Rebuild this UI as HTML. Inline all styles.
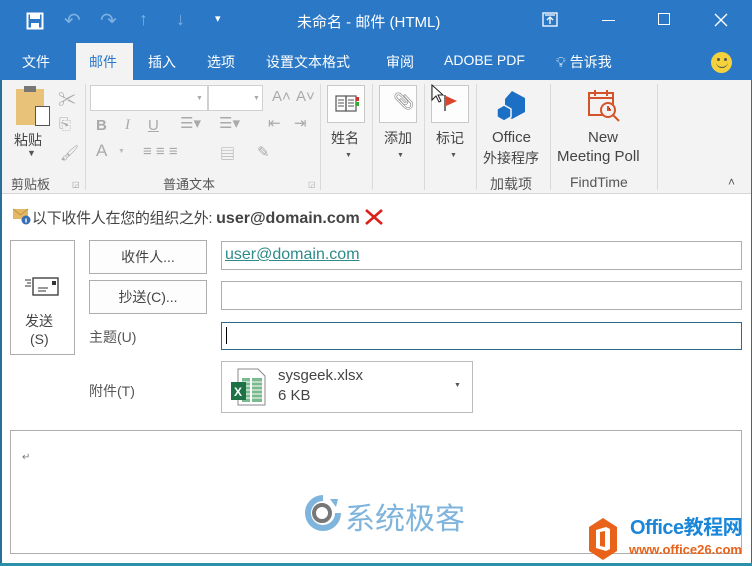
<!DOCTYPE html>
<html><head><meta charset="utf-8">
<style>
*{margin:0;padding:0;box-sizing:border-box}
body{width:752px;height:566px;overflow:hidden;background:#fff;font-family:"Liberation Sans","Noto Sans CJK SC",sans-serif;position:relative;color:#444}
.a{position:absolute;white-space:nowrap}
.tb{left:0;top:0;width:752px;height:80px;background:#2a78c6}
.tab{top:52px;font-size:14px;color:#fff}
.rib{left:0;top:80px;width:752px;height:114px;background:#f3f3f3;border-bottom:1px solid #d6d6d6}
.sep{width:1px;background:#dadada;top:84px;height:106px}
.gl{top:174px;font-size:13px;color:#555}
.lbl{font-size:14px;color:#444;text-align:center}
.btn{background:#fdfdfd;border:1px solid #c8c8c8}
.inp{background:#fff;border:1px solid #adadad}
.g{color:#aaa;font-size:15px}
</style></head><body>
<div class="a tb"></div>
<svg class="a" style="left:26px;top:12px" width="18" height="18" viewBox="0 0 18 18"><rect x="1.5" y="1.5" width="15" height="15" fill="none" stroke="#fff" stroke-width="2"/><rect x="4" y="2" width="10" height="5" fill="#fff"/><rect x="5" y="11" width="8" height="5" fill="#fff"/></svg>
<div class="a" style="left:64px;top:8px;color:#7fb0e2;font-size:20px">&#x21B6;</div>
<div class="a" style="left:100px;top:8px;color:#7fb0e2;font-size:20px">&#x21B7;</div>
<div class="a" style="left:139px;top:9px;color:#7fb0e2;font-size:18px">&#x2191;</div>
<div class="a" style="left:176px;top:9px;color:#7fb0e2;font-size:18px">&#x2193;</div>
<div class="a" style="left:215px;top:12px;color:#fff;font-size:11px">&#x25BE;</div>
<div class="a" style="left:297px;top:11px;color:#fff;font-size:15px">未命名 - 邮件 (HTML)</div>
<svg class="a" style="left:542px;top:12px" width="16" height="15"><rect x="1" y="1" width="14" height="13" fill="none" stroke="#fff" stroke-width="1.3"/><path d="M8 12V5M5 8l3-3 3 3M3 3h10" stroke="#fff" fill="none" stroke-width="1.3"/></svg>
<div class="a" style="left:602px;top:20px;width:13px;height:1px;background:#fff"></div>
<div class="a" style="left:658px;top:13px;width:12px;height:12px;border:1.3px solid #fff"></div>
<svg class="a" style="left:714px;top:13px" width="14" height="14"><path d="M1 1L13 13M13 1L1 13" stroke="#fff" stroke-width="1.4"/></svg>
<div class="a" style="left:76px;top:43px;width:57px;height:38px;background:#f3f3f3"></div>
<div class="a tab" style="left:22px">文件</div>
<div class="a tab" style="left:89px;color:#2a78c6">邮件</div>
<div class="a tab" style="left:148px">插入</div>
<div class="a tab" style="left:207px">选项</div>
<div class="a tab" style="left:266px">设置文本格式</div>
<div class="a tab" style="left:386px">审阅</div>
<div class="a tab" style="left:444px">ADOBE PDF</div>
<div class="a tab" style="left:556px">&#x1F4A1;&#xFE0E; 告诉我</div>
<div class="a" style="left:711px;top:52px;width:21px;height:21px;border-radius:50%;background:#f5d23c"></div>
<div class="a" style="left:717px;top:58px;width:3px;height:3px;background:#555;border-radius:50%"></div>
<div class="a" style="left:724px;top:58px;width:3px;height:3px;background:#555;border-radius:50%"></div>
<div class="a" style="left:716px;top:62px;width:12px;height:6px;border-bottom:1.5px solid #555;border-radius:0 0 6px 6px"></div>
<div class="a rib"></div>
<div class="a" style="left:16px;top:89px;width:28px;height:36px;background:#e9c27a"></div>
<div class="a" style="left:24px;top:86px;width:12px;height:6px;background:#777"></div>
<div class="a" style="left:35px;top:106px;width:15px;height:20px;background:#fff;border:1px solid #555"></div>
<div class="a lbl" style="left:14px;top:130px">粘贴</div>
<div class="a g" style="left:27px;top:148px;font-size:9px;color:#555">&#x25BC;</div>
<div class="a g" style="left:58px;top:86px;font-size:18px">&#x2702;</div>
<div class="a g" style="left:59px;top:116px">&#x2398;</div>
<div class="a g" style="left:60px;top:144px">&#x1F58C;&#xFE0E;</div>
<div class="a gl" style="left:11px">剪贴板</div>
<div class="a" style="left:72px;top:180px;font-size:8px;color:#999">&#x25F2;</div>
<div class="a sep" style="left:85px"></div>
<div class="a inp" style="left:90px;top:85px;width:118px;height:26px;border-color:#d0d0d0"></div>
<div class="a inp" style="left:208px;top:85px;width:55px;height:26px;border-color:#d0d0d0"></div>
<div class="a" style="left:196px;top:95px;font-size:7px;color:#aaa">&#x25BC;</div>
<div class="a" style="left:253px;top:95px;font-size:7px;color:#aaa">&#x25BC;</div>
<div class="a g" style="left:272px;top:88px">A&#x2C4;</div>
<div class="a g" style="left:296px;top:88px">A&#x2C5;</div>
<div class="a" style="left:96px;top:117px;font-size:15px;color:#aaa;font-weight:bold">B</div>
<div class="a" style="left:125px;top:117px;font-size:15px;color:#aaa;font-style:italic;font-family:'Liberation Serif',serif">I</div>
<div class="a" style="left:148px;top:117px;font-size:15px;color:#aaa;text-decoration:underline">U</div>
<div class="a g" style="left:180px;top:114px">&#x2630;&#x25BE;</div>
<div class="a g" style="left:219px;top:114px">&#x2630;&#x25BE;</div>
<div class="a g" style="left:268px;top:114px">&#x21E4;</div>
<div class="a g" style="left:294px;top:114px">&#x21E5;</div>
<div class="a" style="left:96px;top:141px;font-size:17px;color:#aaa">A</div>
<div class="a" style="left:118px;top:148px;font-size:7px;color:#bbb">&#x25BC;</div>
<div class="a g" style="left:143px;top:143px">&#x2261; &#x2261; &#x2261;</div>
<div class="a g" style="left:220px;top:143px">&#x25A4;</div>
<div class="a g" style="left:257px;top:143px">&#x270E;</div>
<div class="a gl" style="left:163px">普通文本</div>
<div class="a" style="left:308px;top:180px;font-size:8px;color:#aaa">&#x25F2;</div>
<div class="a sep" style="left:320px"></div>
<div class="a btn" style="left:327px;top:85px;width:38px;height:38px"></div>
<svg class="a" style="left:335px;top:94px" width="24" height="20"><rect x="1" y="2" width="10" height="15" fill="none" stroke="#555" stroke-width="1.2"/><rect x="11" y="2" width="10" height="15" fill="none" stroke="#555" stroke-width="1.2"/><path d="M3 6h6M3 9h6M3 12h6M13 6h6M13 9h6M13 12h6" stroke="#555"/><rect x="21" y="3" width="3" height="4" fill="#c33"/><rect x="21" y="8" width="3" height="4" fill="#3a3"/></svg>
<div class="a lbl" style="left:331px;top:128px">姓名</div>
<div class="a" style="left:345px;top:152px;font-size:7px;color:#555">&#x25BC;</div>
<div class="a sep" style="left:372px"></div>
<div class="a btn" style="left:379px;top:85px;width:38px;height:38px"></div>
<div class="a" style="left:393px;top:92px;font-size:17px;color:#888">&#x1F4CE;&#xFE0E;</div>
<div class="a lbl" style="left:384px;top:128px">添加</div>
<div class="a" style="left:397px;top:152px;font-size:7px;color:#555">&#x25BC;</div>
<div class="a sep" style="left:424px"></div>
<div class="a btn" style="left:431px;top:85px;width:38px;height:38px"></div>
<svg class="a" style="left:430px;top:83px" width="32" height="32"><path d="M15 12v16" stroke="#555" stroke-width="1.6"/><path d="M16 13l11 5-11 5z" fill="#d9442c"/><path d="M2 2v15l4-4 3 6 2-1-3-6h5z" fill="#fff" stroke="#222" stroke-width="1"/></svg>
<div class="a lbl" style="left:436px;top:128px">标记</div>
<div class="a" style="left:450px;top:152px;font-size:7px;color:#555">&#x25BC;</div>
<div class="a sep" style="left:476px"></div>
<svg class="a" style="left:496px;top:90px" width="34" height="32"><path d="M16 1l13 7v14l-13 7-7-4V9z" fill="#1b6fc4"/><path d="M8 15l7 4v8l-7 4-7-4v-8z" fill="#1b6fc4" stroke="#f3f3f3" stroke-width="1.5"/></svg>
<div class="a lbl" style="left:492px;top:129px;font-size:15px">Office</div>
<div class="a lbl" style="left:483px;top:148px">外接程序</div>
<div class="a gl" style="left:490px;font-size:14px">加载项</div>
<div class="a sep" style="left:550px"></div>
<svg class="a" style="left:587px;top:89px" width="36" height="36"><rect x="2" y="4" width="24" height="22" fill="none" stroke="#d5532b" stroke-width="2"/><path d="M2 9h24M8 1v6M20 1v6" stroke="#d5532b" stroke-width="2"/><circle cx="21" cy="21" r="7" fill="#f3f3f3" stroke="#d5532b" stroke-width="2"/><path d="M21 17v4h3M26 26l6 6" stroke="#d5532b" stroke-width="2"/></svg>
<div class="a lbl" style="left:588px;top:129px;font-size:15px">New</div>
<div class="a lbl" style="left:557px;top:148px;font-size:15px">Meeting Poll</div>
<div class="a gl" style="left:570px;font-size:14px">FindTime</div>
<div class="a sep" style="left:657px"></div>
<div class="a" style="left:728px;top:175px;font-size:12px;color:#555">&#x2C4;</div>
<svg class="a" style="left:12px;top:207px" width="20" height="18"><rect x="1" y="2" width="15" height="10" fill="#e3b867"/><path d="M1 2l7.5 6L16 2" stroke="#c9963f" fill="none"/><circle cx="14" cy="13" r="4.5" fill="#3a6fb6"/><rect x="13.3" y="11.5" width="1.4" height="4" fill="#fff"/></svg>
<div class="a" style="left:32px;top:207px;font-size:15px;color:#444;letter-spacing:-0.3px">以下收件人在您的组织之外: <b style="color:#444;font-size:16px;letter-spacing:0">user@domain.com</b></div>
<svg class="a" style="left:364px;top:208px" width="20" height="18"><path d="M2 2L18 16M18 2L2 16" stroke="#d9201b" stroke-width="2.6"/></svg>
<div class="a btn" style="left:10px;top:240px;width:65px;height:115px;border-color:#adadad;background:#fff"></div>
<svg class="a" style="left:24px;top:277px" width="36" height="20"><rect x="9" y="1" width="25" height="17" fill="#fff" stroke="#333" stroke-width="1.3"/><path d="M1 3h6M3 6h4M1 9h6M14 11h10M14 14h8" stroke="#333"/><rect x="28" y="4" width="4" height="4" fill="#333"/></svg>
<div class="a lbl" style="left:25px;top:311px">发送</div>
<div class="a lbl" style="left:30px;top:331px">(S)</div>
<div class="a btn" style="left:89px;top:240px;width:118px;height:34px;border-color:#adadad;text-align:center;font-size:14px;line-height:32px">收件人...</div>
<div class="a btn" style="left:89px;top:280px;width:118px;height:34px;border-color:#adadad;text-align:center;font-size:14px;line-height:32px">抄送(C)...</div>
<div class="a" style="left:89px;top:327px;font-size:14px;color:#555">主题(U)</div>
<div class="a" style="left:89px;top:381px;font-size:14px;color:#555">附件(T)</div>
<div class="a inp" style="left:221px;top:241px;width:521px;height:29px"></div>
<div class="a" style="left:225px;top:246px;font-size:16px;color:#2f8a8a;text-decoration:underline">user@domain.com</div>
<div class="a inp" style="left:221px;top:281px;width:521px;height:29px"></div>
<div class="a inp" style="left:221px;top:322px;width:521px;height:28px;border-color:#2b6a8a"></div>
<div class="a" style="left:226px;top:327px;width:1px;height:17px;background:#000"></div>
<div class="a inp" style="left:221px;top:361px;width:252px;height:52px;border-color:#bbb"></div>
<svg class="a" style="left:230px;top:368px" width="36" height="38"><path d="M8 1h20l7 7v29H8z" fill="#fff" stroke="#888"/><path d="M12 10h8v24h-8zM22 10h10v24H22z" fill="#5aa772" opacity=".8"/><path d="M12 14h20M12 18h20M12 22h20M12 26h20M12 30h20" stroke="#fff"/><rect x="1" y="14" width="15" height="18" fill="#1e7145"/><text x="4" y="28" font-size="12" font-weight="bold" fill="#fff" font-family="Liberation Sans">X</text></svg>
<div class="a" style="left:278px;top:367px;font-size:15px;color:#444">sysgeek.xlsx</div>
<div class="a" style="left:278px;top:387px;font-size:15px;color:#444">6 KB</div>
<div class="a" style="left:454px;top:382px;font-size:7px;color:#555">&#x25BC;</div>
<div class="a" style="left:10px;top:430px;width:732px;height:124px;border:1px solid #adadad"></div>
<div class="a" style="left:22px;top:452px;font-size:10px;color:#777">&#x21B5;</div>
<svg class="a" style="left:302px;top:495px" width="42" height="36"><path d="M21 3A15 15 0 1 0 36 18" stroke="#7fb4dc" stroke-width="6" fill="none"/><circle cx="20" cy="18" r="8" fill="none" stroke="#777" stroke-width="4"/><path d="M28 4l8 0-2 8z" fill="#7fb4dc"/></svg>
<div class="a" style="left:345px;top:494px;font-size:30px;color:#7fb4dc">系统极客</div>
<svg class="a" style="left:588px;top:517px" width="30" height="44"><path d="M15 1l14 9v24l-14 9-14-9V10z" fill="#e8621a"/><path d="M8 13l10-3 4 2v20l-4 2-10-3z" fill="#fff"/><path d="M12 15v14l5 1V14z" fill="#e8621a"/></svg>
<div class="a" style="left:630px;top:517px;font-size:20px;line-height:22px;font-weight:bold;color:#1a86d8;letter-spacing:-.5px">Office教程网</div>
<div class="a" style="left:629px;top:543px;font-size:13px;line-height:14px;font-weight:bold;color:#e8621a">www.office26.com</div>
<div class="a" style="left:0;top:80px;width:1.5px;height:486px;background:#2a6f9a"></div>
<div class="a" style="left:750.5px;top:80px;width:1.5px;height:486px;background:#2a6f9a"></div>
<div class="a" style="left:0;top:563px;width:752px;height:3px;background:#2a8fa8"></div>
</body></html>
